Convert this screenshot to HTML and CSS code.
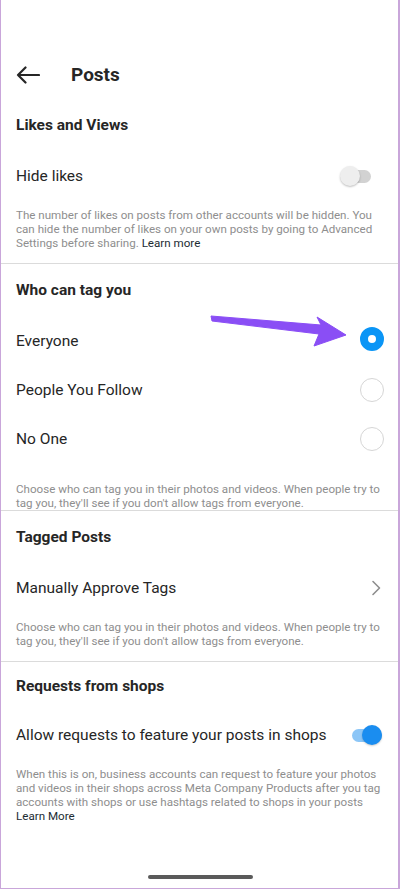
FILE: index.html
```html
<!DOCTYPE html>
<html>
<head>
<meta charset="utf-8">
<link rel="stylesheet" href="styles.css">
</head>
<body>
<div class="screen">
  <header class="topbar">
    <svg class="back" width="24" height="18" viewBox="0 0 24 18"><path d="M23 9H2M9.5 1.5L2 9l7.5 7.5" fill="none" stroke="#262626" stroke-width="2.2" stroke-linecap="round" stroke-linejoin="round"/></svg>
    <h1 class="title">Posts</h1>
  </header>

  <section class="section">
    <h2 class="sec-title first">Likes and Views</h2>
    <div class="row">
      <span class="label">Hide likes</span>
      <span class="toggle off"><span class="track"></span><span class="knob"></span></span>
    </div>
    <p class="desc">The number of likes on posts from other accounts will be hidden. You can hide the number of likes on your own posts by going to Advanced Settings before sharing. <span class="link">Learn more</span></p>
  </section>

  <section class="section">
    <h2 class="sec-title">Who can tag you</h2>
    <div class="row">
      <span class="label">Everyone</span>
      <span class="radio checked"></span>
    </div>
    <div class="row">
      <span class="label">People You Follow</span>
      <span class="radio"></span>
    </div>
    <div class="row">
      <span class="label">No One</span>
      <span class="radio"></span>
    </div>
    <p class="desc desc-tight">Choose who can tag you in their photos and videos. When people try to tag you, they'll see if you don't allow tags from everyone.</p>
  </section>

  <section class="section">
    <h2 class="sec-title">Tagged Posts</h2>
    <div class="row">
      <span class="label">Manually Approve Tags</span>
      <svg class="chev" width="10" height="16" viewBox="0 0 10 16"><path d="M2 1.5L8.5 8 2 14.5" fill="none" stroke="#8e8e8e" stroke-width="1.6" stroke-linecap="round" stroke-linejoin="round"/></svg>
    </div>
    <p class="desc">Choose who can tag you in their photos and videos. When people try to tag you, they'll see if you don't allow tags from everyone.</p>
  </section>

  <section class="section last">
    <h2 class="sec-title short">Requests from shops</h2>
    <div class="row">
      <span class="label">Allow requests to feature your posts in shops</span>
      <span class="toggle on"><span class="track"></span><span class="knob"></span></span>
    </div>
    <p class="desc">When this is on, business accounts can request to feature your photos and videos in their shops across Meta Company Products after you tag accounts with shops or use hashtags related to shops in your posts <span class="link">Learn More</span></p>
  </section>

  <div class="home-bar"></div>

  <svg class="annot" width="400" height="889" viewBox="0 0 400 889"><polygon points="211,316 321,325 317,317 346,335 314,346 319,334 212,321" fill="#8a4ef5" stroke="#8a4ef5" stroke-width="1" stroke-linejoin="round"/></svg>
</div>
</body>
</html>
```
FILE: styles.css
```css
* { box-sizing: border-box; }
html, body { margin: 0; padding: 0; background: #fff; }
body { font-family: Roboto, "Noto Sans", "Liberation Sans", sans-serif; color: #262626; }
.screen {
  position: relative;
  width: 400px;
  height: 889px;
  border-left: 1px solid #c9a6da;
  border-right: 2px solid #c9a6da;
  border-bottom: 1px solid #c9a6da;
  overflow: hidden;
}
.topbar {
  display: flex;
  align-items: center;
  height: 97px;
  padding: 52px 0 0 15px;
}
.back { display: block; }
.title {
  margin: 0 0 0 31px;
  font-size: 19px;
  font-weight: 700;
  line-height: 45px;
}
.section { border-bottom: 1px solid #dbdbdb; }
.section.last { border-bottom: none; }
.sec-title {
  margin: 0;
  height: 52px;
  display: flex;
  align-items: center;
  padding-left: 15px;
  font-size: 15.5px;
  font-weight: 700;
}
.sec-title.first { height: 54px; padding-top: 2px; }
.sec-title.short { height: 48px; }
.row {
  height: 49px;
  display: flex;
  align-items: center;
  justify-content: space-between;
  padding: 0 14px 0 15px;
}
.label { font-size: 15.5px; font-weight: 400; }
.desc {
  margin: 0;
  padding: 8px 6px 13px 15px;
  font-size: 11.6px;
  line-height: 14px;
  color: #8e8e8e;
}
.desc-tight { padding-top: 19px; padding-bottom: 0; }
.link { color: #1c2b33; }
.toggle { position: relative; width: 31px; height: 20px; display: block; }
.toggle .track {
  position: absolute; left: 1px; right: 0; top: 4px; height: 13px;
  border-radius: 7px;
}
.toggle .knob {
  position: absolute; top: 0; width: 20px; height: 20px; border-radius: 50%;
}
.toggle.off { margin-right: 13px; }
.toggle.off .track { background: #d2d2d2; }
.toggle.off .knob { left: 0; background: #eeeeee; box-shadow: 0 1px 2px rgba(0,0,0,0.25); }
.toggle.on { margin-right: 2px; }
.toggle.on .track { background: #8cc6f7; }
.toggle.on .knob { right: 0; background: #1a8df0; box-shadow: 0 1px 2px rgba(0,0,0,0.2); }
.radio {
  display: block;
  width: 24px; height: 24px; border-radius: 50%;
  border: 1.5px solid #d6d6d6;
}
.radio.checked { border: 8px solid #0a95f6; background: #fff; margin-top: -3px; }
.chev { display: block; margin-right: 3px; }
.home-bar {
  position: absolute;
  left: 147px; top: 875px;
  width: 105px; height: 4px;
  border-radius: 2px;
  background: #5a5a5a;
}
.annot { position: absolute; left: -1px; top: 0; pointer-events: none; }
```
